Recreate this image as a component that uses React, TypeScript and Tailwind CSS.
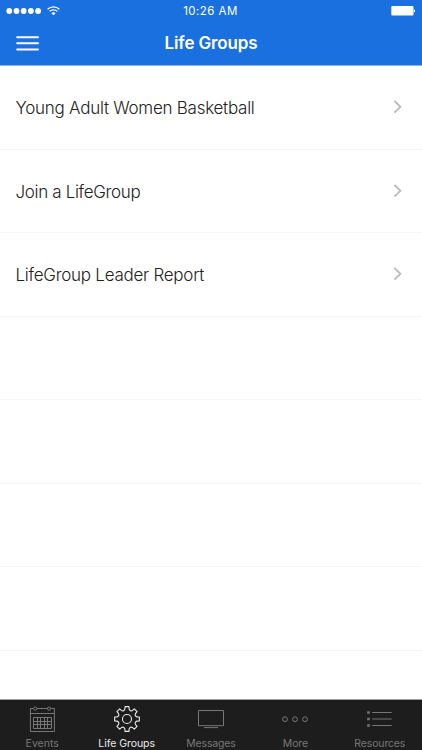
import { useState } from 'react';
import type { ReactNode } from 'react';

interface Tab {
  label: string;
  icon: ReactNode;
  labelClass: string;
}

const GROUPS = [
  { label: 'Young Adult Women Basketball', labelClass: 'tracking-[-0.26px]' },
  { label: 'Join a LifeGroup', labelClass: 'tracking-[-0.34px]' },
  { label: 'LifeGroup Leader Report', labelClass: 'tracking-[-0.26px]' },
];

const EMPTY_ROWS = 4;
const TEETH = 8;

// Polar point around the 14,14 centre, angle in degrees clockwise from the top
function polar(angle: number, radius: number) {
  const rad = (angle * Math.PI) / 180;
  return `${(14 + radius * Math.sin(rad)).toFixed(2)} ${(14 - radius * Math.cos(rad)).toFixed(2)}`;
}

// Cog outline: flat-topped teeth joined by curved valleys
function gearPath() {
  let d = `M${polar(-9, 12.5)}`;
  for (let i = 0; i < TEETH; i++) {
    const a = i * (360 / TEETH);
    d += `L${polar(a + 9, 12.5)}L${polar(a + 12, 10.2)}`;
    d += `Q${polar(a + 22.5, 7.9)} ${polar(a + 33, 10.2)}L${polar(a + 36, 12.5)}`;
  }
  return `${d}Z`;
}

function CalendarIcon() {
  return (
    <svg width="28" height="28" viewBox="0 0 28 28" fill="none" stroke="currentColor">
      <path d="M5.4 3.5H2.4v23h24v-23h-3.5M9 3.5h10.3M2.4 8.5h24" />
      <circle cx="7.3" cy="3.6" r="1.6" />
      <circle cx="21" cy="3.6" r="1.6" />
      <path d="M5.5 12.5h18v11h-18zM5.5 16.5h18M5.5 19.5h18M9.5 12.5v11M12.5 12.5v11M16.5 12.5v11M19.5 12.5v11" />
    </svg>
  );
}

function GearIcon() {
  return (
    <svg width="28" height="28" viewBox="0 0 28 28" fill="none" stroke="currentColor">
      <path d={gearPath()} strokeWidth="1.1" strokeLinejoin="round" />
      <circle cx="14" cy="14" r="4.5" strokeWidth="1.1" />
    </svg>
  );
}

function ScreenIcon() {
  return (
    <svg width="28" height="28" viewBox="0 0 28 28" fill="none" stroke="currentColor">
      <path d="M1.5 5.5h25v15.2h-25z" />
      <path d="M7 22.6h14" />
    </svg>
  );
}

function MoreIcon() {
  return (
    <svg width="28" height="28" viewBox="0 0 28 28" fill="none" stroke="currentColor">
      <circle cx="4" cy="14.2" r="2.4" />
      <circle cx="14" cy="14.2" r="2.4" />
      <circle cx="24" cy="14.2" r="2.4" />
    </svg>
  );
}

function ListIcon() {
  return (
    <svg width="28" height="28" viewBox="0 0 28 28" fill="none" stroke="currentColor">
      <path d="M6.2 7.5h19.5M6.2 14h19.5M6.2 20.5h19.5" />
      <path d="M1.2 7.5h2.6M1.2 14h2.6M1.2 20.5h2.6" strokeWidth="2.6" />
    </svg>
  );
}

const TABS: Tab[] = [
  { label: 'Events', icon: <CalendarIcon />, labelClass: 'tracking-[0px]' },
  { label: 'Life Groups', icon: <GearIcon />, labelClass: 'tracking-[-0.05px]' },
  { label: 'Messages', icon: <ScreenIcon />, labelClass: 'tracking-[-0.15px]' },
  { label: 'More', icon: <MoreIcon />, labelClass: 'tracking-[-0.1px]' },
  { label: 'Resources', icon: <ListIcon />, labelClass: 'tracking-[-0.15px]' },
];

function StatusBar() {
  return (
    <div className="grid h-[22px] grid-cols-3 items-center pr-[7px] pl-[6px]">
      <div className="flex items-center">
        <svg width="36" height="8" viewBox="0 0 36 8" fill="currentColor">
          {[0, 1, 2, 3, 4].map((i) => (
            <circle key={i} cx={3.3 + i * 7.2} cy="4" r="2.9" />
          ))}
        </svg>
        <svg
          className="ml-[5px]"
          width="13"
          height="10"
          viewBox="0 0 13 10"
          fill="none"
          stroke="currentColor"
          strokeWidth="1.3"
        >
          <path d="M.6 3.2a8.4 8.4 0 0 1 11.8 0M2.6 5.4a5.5 5.5 0 0 1 7.8 0" />
          <path d="M6.5 9.3 4.4 7.2a3 3 0 0 1 4.2 0z" fill="currentColor" stroke="none" />
        </svg>
      </div>
      <span className="pt-[2px] text-center text-[11.5px] tracking-[0.45px] whitespace-nowrap">
        10:26 AM
      </span>
      <svg className="justify-self-end" width="24" height="10" viewBox="0 0 24 10">
        <rect x="0.3" y="0" width="22.2" height="9.6" rx="1" fill="currentColor" />
        <rect x="22.8" y="3.4" width="1.2" height="2.8" rx="0.6" fill="currentColor" />
      </svg>
    </div>
  );
}

export default function App() {
  const [active, setActive] = useState('Life Groups');

  return (
    <div className="flex h-screen w-full flex-col overflow-hidden bg-white font-['Inter','Liberation_Sans',sans-serif]">
      <header className="h-[66px] shrink-0 border-b border-[#8fb8ee] bg-[#1b70df] text-white">
        <StatusBar />
        <div className="grid h-[43px] grid-cols-[1fr_auto_1fr] items-center px-4">
          <button type="button" aria-label="Menu" className="w-6">
            <svg width="23" height="16" viewBox="0 0 23 16" stroke="currentColor" strokeWidth="2">
              <path d="M1.2 1.2h20.8M1.2 7.3h20.8M1.2 13.4h20.8" strokeLinecap="round" />
            </svg>
          </button>
          <h1 className="text-[17px] font-semibold tracking-[-0.15px]">Life Groups</h1>
        </div>
      </header>

      <ul className="min-h-0 flex-1 overflow-hidden">
        {GROUPS.map((group) => (
          <li key={group.label} className="h-[83.5px] border-b border-[#f5f5f5]">
            <button
              type="button"
              className="flex h-full w-full items-center justify-between pr-5 pl-[15.5px] text-left"
            >
              <span
                className={`pt-[3px] text-[17px] font-light whitespace-nowrap text-[#222] ${group.labelClass}`}
              >
                {group.label}
              </span>
              <svg
                width="9"
                height="14"
                viewBox="0 0 9 14"
                fill="none"
                stroke="#b9b9bd"
                strokeWidth="1.8"
              >
                <path d="m1.4 .9 6 5.9-6 5.9" />
              </svg>
            </button>
          </li>
        ))}
        {Array.from({ length: EMPTY_ROWS }, (_, i) => (
          <li key={i} className="h-[83.5px] border-b border-[#f5f5f5]" />
        ))}
      </ul>

      <nav className="grid h-[51px] shrink-0 grid-cols-5 border-t border-[#a0a0a0] bg-[#1d1d1d]">
        {TABS.map((tab) => (
          <button
            type="button"
            key={tab.label}
            onClick={() => setActive(tab.label)}
            className={`flex flex-col items-center pt-[5px] ${
              tab.label === active ? 'text-[#eaeaea]' : 'text-[#777]'
            }`}
          >
            {tab.icon}
            <span
              className={`mt-[4px] text-[10.5px] leading-[13px] whitespace-nowrap ${tab.labelClass}`}
            >
              {tab.label}
            </span>
          </button>
        ))}
      </nav>
    </div>
  );
}
